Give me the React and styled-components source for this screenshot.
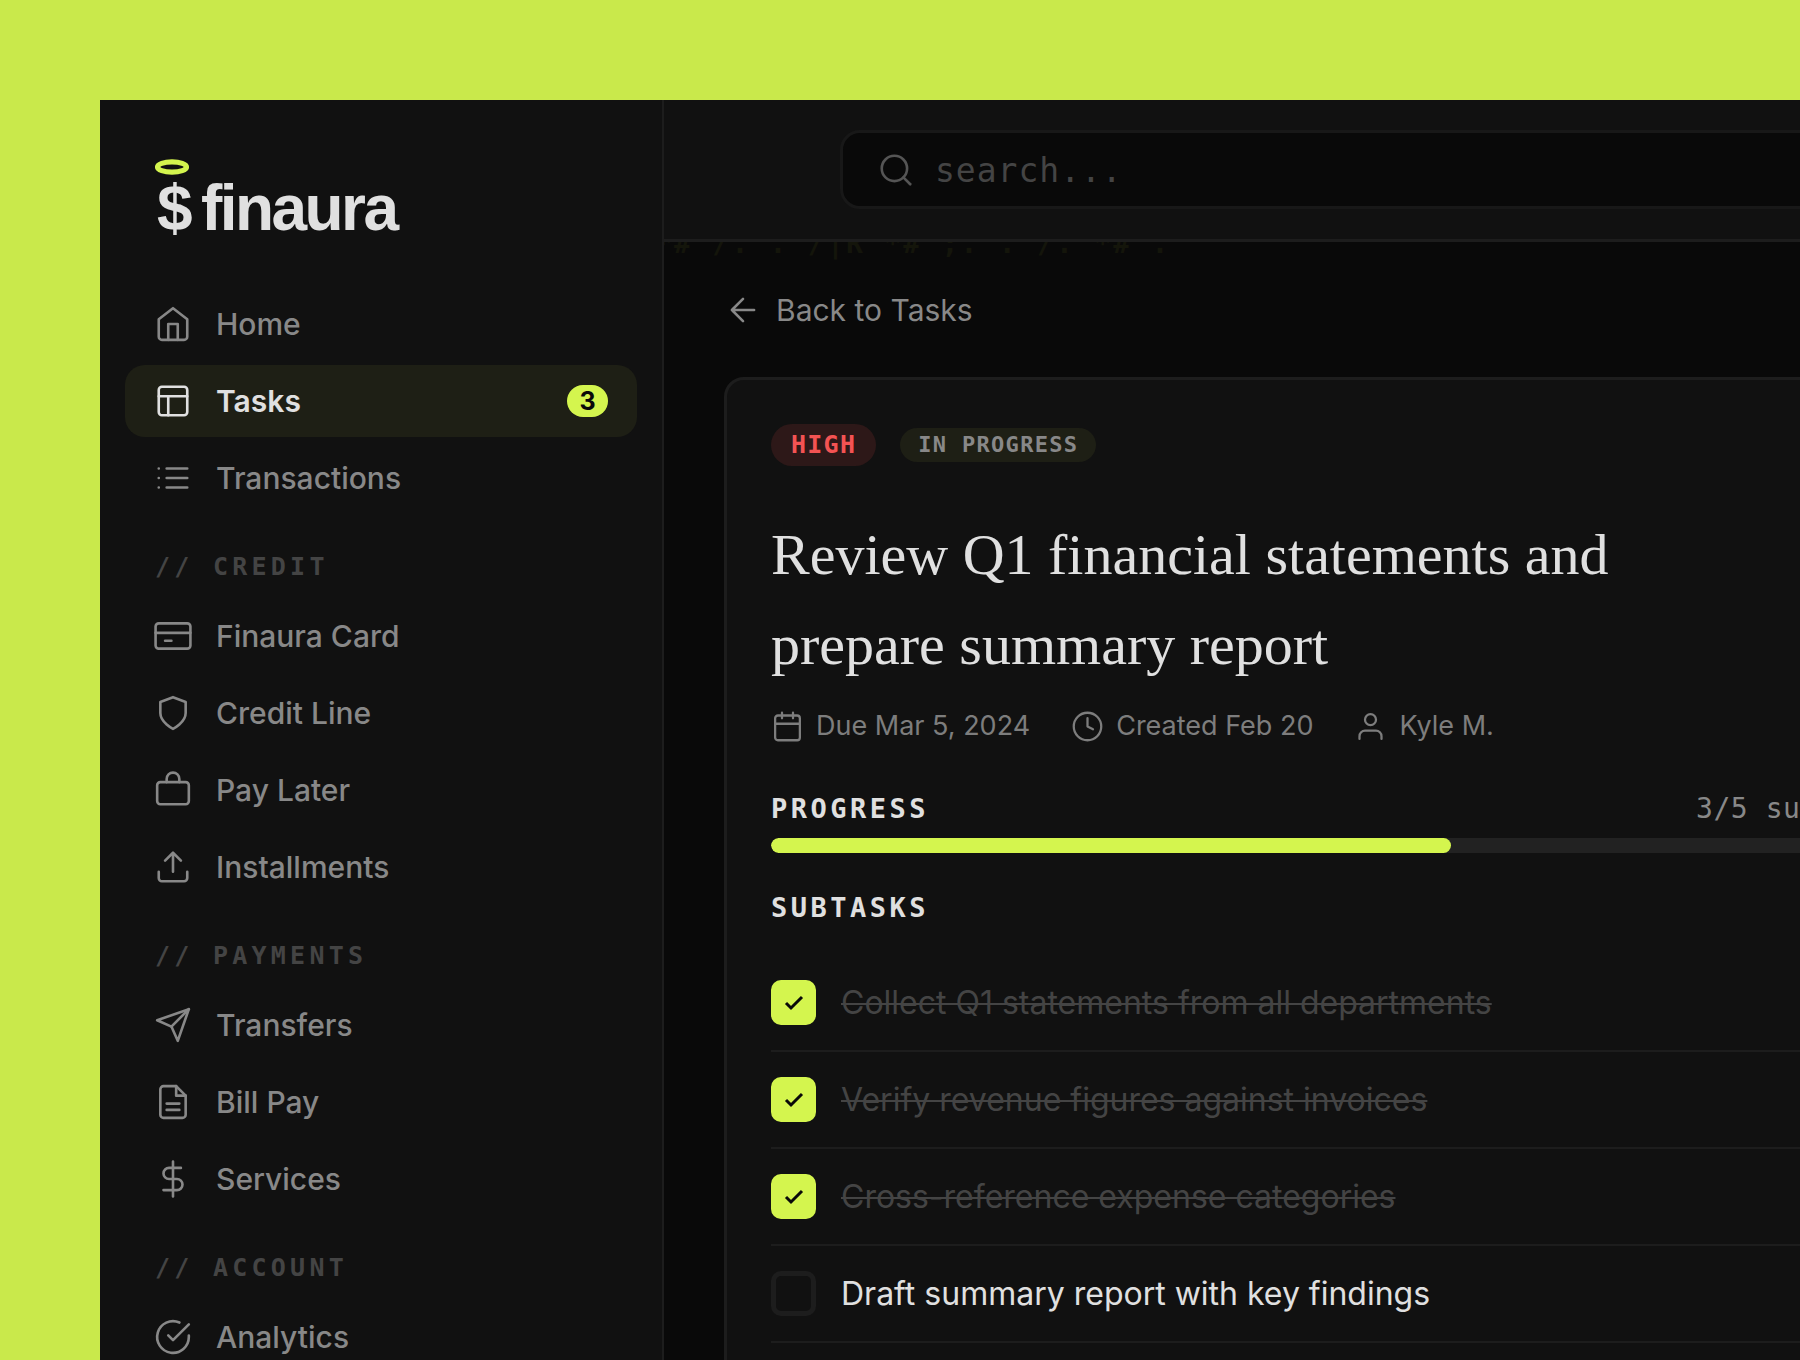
import React, { useState } from "react";
import styled, { createGlobalStyle } from "styled-components";

const GlobalStyle = createGlobalStyle`
  *, *::before, *::after { box-sizing: border-box; }
  html, body { margin: 0; padding: 0; }
  body {
    background: #c9e94b;
    color: #e0e0e0;
    font-family: Inter, sans-serif;
    overflow: hidden;
  }
`;

const mono = `"DejaVu Sans Mono", monospace`;
const lime = "#d4f54e";
const line = "#1d1d1d";
const panel = "#111111";
const ink = "#090909";
const muted = "#888888";

const Stage = styled.div`
  height: 100vh;
  padding: 100px 0 0 100px;
  overflow: hidden;
`;

const Window = styled.div`
  display: flex;
  width: calc(100% + 212px);
  height: 100%;
  background: ${ink};
  overflow: hidden;
`;

const Sidebar = styled.aside`
  flex: none;
  width: 564px;
  padding: 52px 25px 0;
  background: ${panel};
  border-right: 2px solid ${line};
`;

const Logo = styled.a`
  display: flex;
  align-items: flex-end;
  gap: 11px;
  height: 92px;
  margin-bottom: 44px;
  padding-left: 29px;
  color: #e0e0e0;
  font-family: "Liberation Sans", Arial, sans-serif;
  font-size: 64px;
  font-weight: 700;
  line-height: 72px;
  letter-spacing: -0.04em;
  text-decoration: none;
`;

const LogoMark = styled.span`
  display: flex;
  flex-direction: column;
  align-items: flex-end;
`;

const Halo = styled.svg`
  display: block;
  width: 36px;
  height: 16px;
  margin-bottom: -3px;
`;

const NavGroup = styled.nav`
  display: flex;
  flex-direction: column;
  gap: 5px;
`;

const NavLabel = styled.h2`
  margin: 0;
  padding: 35px 30px 15px;
  color: #444444;
  font-family: ${mono};
  font-size: 25px;
  font-weight: 700;
  line-height: 36px;
  letter-spacing: 0.17em;
  text-transform: uppercase;
`;

const NavItem = styled.a`
  display: flex;
  align-items: center;
  gap: 24px;
  height: 72px;
  padding: 0 29px;
  border-radius: 20px;
  background: ${(p) => (p.$active ? "#1e1f15" : "transparent")};
  color: ${(p) => (p.$active ? "#e0e0e0" : muted)};
  font-size: 30px;
  font-weight: ${(p) => (p.$active ? 600 : 500)};
  line-height: 36px;
  text-decoration: none;
`;

const Count = styled.span`
  margin-left: auto;
  min-width: 41px;
  border-radius: 16px;
  background: ${lime};
  color: ${ink};
  font-size: 25px;
  font-weight: 700;
  line-height: 32px;
  text-align: center;
`;

const Icon = styled.svg`
  flex: none;
  display: block;
  width: ${(p) => p.$size}px;
  height: ${(p) => p.$size}px;
  fill: none;
  stroke: currentColor;
  stroke-width: 1.65;
  stroke-linecap: round;
  stroke-linejoin: round;
`;

const Main = styled.main`
  flex: 1;
  min-width: 0;
  display: flex;
  flex-direction: column;
`;

const TopBar = styled.header`
  display: flex;
  justify-content: center;
  padding: 30px 60px;
  background: ${panel};
  border-bottom: 3px solid ${line};
`;

const SearchBox = styled.label`
  display: flex;
  align-items: center;
  gap: 20px;
  width: 100%;
  max-width: 996px;
  height: 79px;
  padding: 0 34px;
  border: 3px solid #181818;
  border-radius: 20px;
  background: ${ink};
  color: #555555;
`;

const SearchInput = styled.input`
  flex: 1;
  min-width: 0;
  padding: 2px 0 0;
  border: 0;
  outline: 0;
  background: transparent;
  color: #e0e0e0;
  font-family: ${mono};
  font-size: 33px;
  letter-spacing: 0.03em;
  &::placeholder { color: #444444; opacity: 1; }
`;

const Content = styled.div`
  position: relative;
  flex: 1;
  padding: 49px 60px 0;
`;

const Pattern = styled.div`
  position: absolute;
  top: -16px;
  left: -9px;
  height: 36px;
  clip-path: inset(16px 0 0 9px);
  color: #14150b;
  font-family: ${mono};
  font-size: 28px;
  font-weight: 700;
  line-height: 36px;
  letter-spacing: 0.08em;
  white-space: pre;
  pointer-events: none;
`;

const BackLink = styled.a`
  display: flex;
  align-items: center;
  gap: 14px;
  width: fit-content;
  color: ${muted};
  font-size: 30px;
  line-height: 38px;
  text-decoration: none;
`;

const Card = styled.article`
  min-height: 1100px;
  margin-top: 48px;
  padding: 44px;
  border: 3px solid ${line};
  border-radius: 20px;
  background: ${panel};
`;

const Tags = styled.div`
  display: flex;
  align-items: center;
  gap: 24px;
`;

const Priority = styled.span`
  padding: 0 20px;
  border-radius: 21px;
  background: #2d1818;
  color: #f35353;
  font-family: ${mono};
  font-size: 25px;
  font-weight: 700;
  line-height: 42px;
  letter-spacing: 0.05em;
`;

const Status = styled.span`
  padding: 0 18px;
  border-radius: 17px;
  background: #1e1f15;
  color: ${muted};
  font-family: ${mono};
  font-size: 22px;
  font-weight: 700;
  line-height: 34px;
  letter-spacing: 0.06em;
`;

const Title = styled.h1`
  max-width: 900px;
  margin: 44px 0 18px;
  color: #e0e0e0;
  font-family: "Liberation Serif", serif;
  font-size: 58px;
  font-weight: 400;
  line-height: 90px;
  font-variant-ligatures: none;
`;

const MetaRow = styled.div`
  display: flex;
  gap: 41px;
`;

const Meta = styled.span`
  display: flex;
  align-items: center;
  gap: 12px;
  color: #7d7d7d;
  font-size: 27px;
  line-height: 36px;
`;

const SectionHead = styled.div`
  display: flex;
  align-items: center;
  justify-content: space-between;
  margin-top: ${(p) => p.$top}px;
`;

const SectionTitle = styled.h2`
  margin: 0;
  color: #e0e0e0;
  font-family: ${mono};
  font-size: 27px;
  font-weight: 700;
  line-height: 36px;
  letter-spacing: 0.13em;
`;

const SectionNote = styled.span`
  color: ${muted};
  font-family: ${mono};
  font-size: 28px;
  line-height: 36px;
  letter-spacing: 0.02em;
`;

const Track = styled.div`
  height: 15px;
  margin-top: 11px;
  border-radius: 8px;
  background: #222222;
  overflow: hidden;
`;

const Fill = styled.div`
  height: 100%;
  border-radius: 8px;
  background: ${lime};
`;

const TaskList = styled.ul`
  margin: 29px 0 0;
  padding: 0;
  list-style: none;
`;

const TaskRow = styled.li`
  border-bottom: 2px solid ${line};
`;

const TaskLabel = styled.label`
  display: flex;
  align-items: center;
  gap: 25px;
  padding: 25px 0;
  color: ${(p) => (p.$done ? "#444444" : "#e0e0e0")};
  font-size: 32px;
  line-height: 45px;
  text-decoration: ${(p) => (p.$done ? "line-through" : "none")};
  text-decoration-thickness: 2px;
`;

const TickBox = styled.span`
  flex: none;
  display: grid;
  place-items: center;
  & > * { grid-area: 1 / 1; }
`;

const Tick = styled.input`
  appearance: none;
  width: 45px;
  height: 45px;
  margin: 0;
  border: 5px solid #1d1d1d;
  border-radius: 10px;
  background: transparent;
  &:checked { border-color: ${lime}; background: ${lime}; }
`;

const TickMark = styled.svg`
  width: 20px;
  height: 16px;
  fill: none;
  stroke: ${ink};
  stroke-width: 3;
  pointer-events: none;
`;

const shapes = {
  home: (
    <>
      <path d="M3 9l9-7 9 7v11a2 2 0 0 1-2 2H5a2 2 0 0 1-2-2z" />
      <polyline points="9 22 9 12 15 12 15 22" />
    </>
  ),
  tasks: (
    <>
      <rect x="3" y="3" width="18" height="18" rx="2" />
      <path d="M3 9h18M9 21V9" />
    </>
  ),
  list: <path d="M8 6h13M8 12h13M8 18h13M3 6h.01M3 12h.01M3 18h.01" />,
  card: (
    <>
      <rect x="1" y="4" width="22" height="16" rx="2" />
      <path d="M1 10h22M7 15h4" />
    </>
  ),
  shield: <path d="M12 22s8-4 8-10V5l-8-3-8 3v7c0 6 8 10 8 10z" />,
  bag: (
    <>
      <rect x="2" y="7" width="20" height="14" rx="2" />
      <path d="M16 7V5a4 4 0 0 0-8 0v2" />
    </>
  ),
  upload: (
    <>
      <path d="M21 15v4a2 2 0 0 1-2 2H5a2 2 0 0 1-2-2v-4" />
      <path d="M17 8l-5-5-5 5M12 3v12" />
    </>
  ),
  send: (
    <>
      <path d="M22 2L11 13" />
      <polygon points="22 2 15 22 11 13 2 9 22 2" />
    </>
  ),
  file: (
    <>
      <path d="M14 2H6a2 2 0 0 0-2 2v16a2 2 0 0 0 2 2h12a2 2 0 0 0 2-2V8z" />
      <path d="M14 2v6h6M16 13H8M16 17H8" />
    </>
  ),
  dollar: <path d="M12 1v22M17 5H9.500a3.500 3.500 0 0 0 0 7h5a3.500 3.500 0 0 1 0 7H6" />,
  check: (
    <>
      <path d="M22 11.080V12a10 10 0 1 1-5.930-9.140" />
      <polyline points="22 4 12 14.010 9 11.010" />
    </>
  ),
  search: (
    <>
      <circle cx="11" cy="11" r="8" />
      <path d="M21 21l-4.350-4.350" />
    </>
  ),
  back: <path d="M19 12H5M12 19l-7-7 7-7" />,
  calendar: (
    <>
      <rect x="3" y="4" width="18" height="18" rx="2" />
      <path d="M16 2v4M8 2v4M3 10h18" />
    </>
  ),
  clock: (
    <>
      <circle cx="12" cy="12" r="10" />
      <polyline points="12 6 12 12 16 14" />
    </>
  ),
  user: (
    <>
      <path d="M20 21v-2a4 4 0 0 0-4-4H8a4 4 0 0 0-4 4v2" />
      <circle cx="12" cy="7" r="4" />
    </>
  ),
};

const Glyph = ({ name, size = 38 }) => (
  <Icon viewBox="0 0 24 24" $size={size} aria-hidden="true">
    {shapes[name]}
  </Icon>
);

const groups = [
  {
    items: [
      { icon: "home", text: "Home" },
      { icon: "tasks", text: "Tasks", active: true, count: 3 },
      { icon: "list", text: "Transactions" },
    ],
  },
  {
    label: "Credit",
    items: [
      { icon: "card", text: "Finaura Card" },
      { icon: "shield", text: "Credit Line" },
      { icon: "bag", text: "Pay Later" },
      { icon: "upload", text: "Installments" },
    ],
  },
  {
    label: "Payments",
    items: [
      { icon: "send", text: "Transfers" },
      { icon: "file", text: "Bill Pay" },
      { icon: "dollar", text: "Services" },
    ],
  },
  { label: "Account", items: [{ icon: "check", text: "Analytics" }] },
];

const initialTasks = [
  { text: "Collect Q1 statements from all departments", done: true },
  { text: "Verify revenue figures against invoices", done: true },
  { text: "Cross-reference expense categories", done: true },
  { text: "Draft summary report with key findings", done: false },
];

const TOTAL = 5;

export default function App() {
  const [tasks, setTasks] = useState(initialTasks);
  const done = tasks.filter((t) => t.done).length;
  const toggle = (i) =>
    setTasks(tasks.map((t, n) => (n === i ? { ...t, done: !t.done } : t)));

  return (
    <Stage>
      <GlobalStyle />
      <Window>
        <Sidebar>
          <Logo href="#">
            <LogoMark>
              <Halo viewBox="0 0 36 16" aria-hidden="true">
                <ellipse cx="18" cy="8" rx="14.500" ry="5.200" fill="none" stroke={lime} strokeWidth="5.200" />
              </Halo>
              <span>$</span>
            </LogoMark>
            <span>finaura</span>
          </Logo>
          {groups.map((g) => (
            <React.Fragment key={g.label || "main"}>
              {g.label && <NavLabel>{`// ${g.label}`}</NavLabel>}
              <NavGroup>
                {g.items.map((it) => (
                  <NavItem key={it.text} href="#" $active={it.active}>
                    <Glyph name={it.icon} />
                    {it.text}
                    {it.count && <Count>{it.count}</Count>}
                  </NavItem>
                ))}
              </NavGroup>
            </React.Fragment>
          ))}
        </Sidebar>
        <Main>
          <TopBar>
            <SearchBox>
              <Glyph name="search" />
              <SearchInput type="text" placeholder="search..." aria-label="Search" />
            </SearchBox>
          </TopBar>
          <Content>
            <Pattern aria-hidden="true">{"*# /. . /|R *# ;. . /. *# ."}</Pattern>
            <BackLink href="#">
              <Glyph name="back" />
              Back to Tasks
            </BackLink>
            <Card>
              <Tags>
                <Priority>HIGH</Priority>
                <Status>IN PROGRESS</Status>
              </Tags>
              <Title>Review Q1 financial statements and prepare summary report</Title>
              <MetaRow>
                <Meta><Glyph name="calendar" size={33} />Due Mar 5, 2024</Meta>
                <Meta><Glyph name="clock" size={33} />Created Feb 20</Meta>
                <Meta><Glyph name="user" size={33} />Kyle M.</Meta>
              </MetaRow>
              <SectionHead $top={47}>
                <SectionTitle>PROGRESS</SectionTitle>
                <SectionNote>{`${done}/${TOTAL} subtasks`}</SectionNote>
              </SectionHead>
              <Track>
                <Fill style={{ width: `${(done / TOTAL) * 100}%` }} />
              </Track>
              <SectionHead $top={37}>
                <SectionTitle>SUBTASKS</SectionTitle>
              </SectionHead>
              <TaskList>
                {tasks.map((t, i) => (
                  <TaskRow key={t.text}>
                    <TaskLabel $done={t.done}>
                      <TickBox>
                        <Tick type="checkbox" checked={t.done} onChange={() => toggle(i)} />
                        {t.done && (
                          <TickMark viewBox="0 0 20 16" aria-hidden="true">
                            <path d="M2 8l5 5L18 2" />
                          </TickMark>
                        )}
                      </TickBox>
                      {t.text}
                    </TaskLabel>
                  </TaskRow>
                ))}
              </TaskList>
            </Card>
          </Content>
        </Main>
      </Window>
    </Stage>
  );
}
